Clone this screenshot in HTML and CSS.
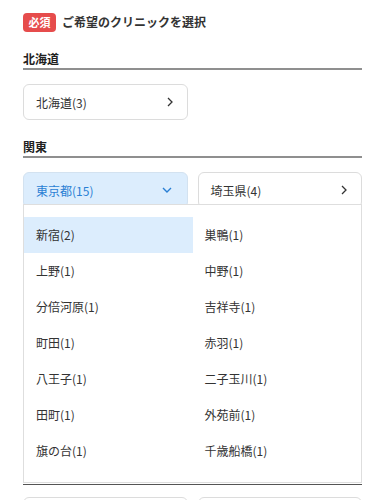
FILE: index.html
```html
<!DOCTYPE html>
<html lang="ja">
<head>
<meta charset="utf-8">
<link rel="stylesheet" href="styles.css">
</head>
<body>
<div class="page">
  <div class="title">
    <span class="badge">必須</span>
    <span class="title-text">ご希望のクリニックを選択</span>
  </div>

  <section class="region">
    <h2 class="region-head">北海道</h2>
    <div class="grid">
      <button class="pref"><span>北海道(3)</span>
        <svg class="chev" width="6" height="10" viewBox="0 0 6 10"><polyline points="1,1 5,5 1,9" fill="none" stroke="#333" stroke-width="1.3"/></svg>
      </button>
    </div>
  </section>

  <section class="region">
    <h2 class="region-head">関東</h2>
    <div class="grid">
      <button class="pref open"><span>東京都(15)</span>
        <svg class="chev" width="10" height="6" viewBox="0 0 10 6"><polyline points="1,1 5,5 9,1" fill="none" stroke="#2a7fd4" stroke-width="1.4"/></svg>
      </button>
      <button class="pref"><span>埼玉県(4)</span>
        <svg class="chev" width="6" height="10" viewBox="0 0 6 10"><polyline points="1,1 5,5 1,9" fill="none" stroke="#333" stroke-width="1.3"/></svg>
      </button>
    </div>
    <div class="dropdown">
      <div class="item active">新宿(2)</div>
      <div class="item">巣鴨(1)</div>
      <div class="item">上野(1)</div>
      <div class="item">中野(1)</div>
      <div class="item">分倍河原(1)</div>
      <div class="item">吉祥寺(1)</div>
      <div class="item">町田(1)</div>
      <div class="item">赤羽(1)</div>
      <div class="item">八王子(1)</div>
      <div class="item">二子玉川(1)</div>
      <div class="item">田町(1)</div>
      <div class="item">外苑前(1)</div>
      <div class="item">旗の台(1)</div>
      <div class="item">千歳船橋(1)</div>
    </div>
    <div class="sep"></div>
    <div class="grid grid-next">
      <button class="pref"><span>神奈川県(5)</span>
        <svg class="chev" width="6" height="10" viewBox="0 0 6 10"><polyline points="1,1 5,5 1,9" fill="none" stroke="#333" stroke-width="1.3"/></svg>
      </button>
      <button class="pref"><span>千葉県(2)</span>
        <svg class="chev" width="6" height="10" viewBox="0 0 6 10"><polyline points="1,1 5,5 1,9" fill="none" stroke="#333" stroke-width="1.3"/></svg>
      </button>
    </div>
  </section>
</div>
</body>
</html>
```

FILE: styles.css
```css
html, body {
  margin: 0;
  padding: 0;
  background: #fff;
}
body {
  font-family: "Noto Sans CJK JP", "Noto Sans", sans-serif;
  color: #333;
}
.page {
  padding: 12px 23px 0 23px;
}
.title {
  display: flex;
  align-items: center;
  gap: 6px;
  height: 20px;
}
.badge {
  display: inline-flex;
  align-items: center;
  justify-content: center;
  height: 19px;
  width: 33px;
  background: #e64c4c;
  color: #fff;
  font-size: 11px;
  font-weight: 700;
  border-radius: 4px;
  line-height: 1;
}
.title-text {
  font-size: 12px;
  font-weight: 700;
  color: #333;
  line-height: 18px;
}
.region-head {
  margin: 18px 0 0 0;
  font-size: 12px;
  font-weight: 700;
  line-height: 18px;
  border-bottom: 2px solid #8f8f8f;
  color: #222;
}
.grid {
  display: grid;
  grid-template-columns: 1fr 1fr;
  column-gap: 10px;
  margin-top: 14px;
}
.pref {
  display: flex;
  align-items: center;
  justify-content: space-between;
  height: 36px;
  padding: 0 14px 0 12px;
  border: 1px solid #dcdcdc;
  border-radius: 6px;
  background: #fff;
  font-family: inherit;
  font-size: 12px;
  color: #333;
  text-align: left;
  box-sizing: border-box;
}
.pref.open {
  background: #dcedfd;
  color: #2a7fd4;
  border-color: #d3e2f0;
  padding-right: 15px;
}
.dropdown {
  position: relative;
  margin-top: -4px;
  background: #fff;
  border: 1px solid #dedede;
  display: grid;
  grid-template-columns: 1fr 1fr;
  padding: 12px 0 13px 0;
}
.item {
  height: 36px;
  line-height: 36px;
  padding-left: 12px;
  font-size: 12px;
  color: #333;
}
.item.active {
  background: #dcedfd;
}
.sep {
  height: 1px;
  background: #555;
  margin-top: 1px;
}
.grid-next {
  margin-top: 12px;
}
```
